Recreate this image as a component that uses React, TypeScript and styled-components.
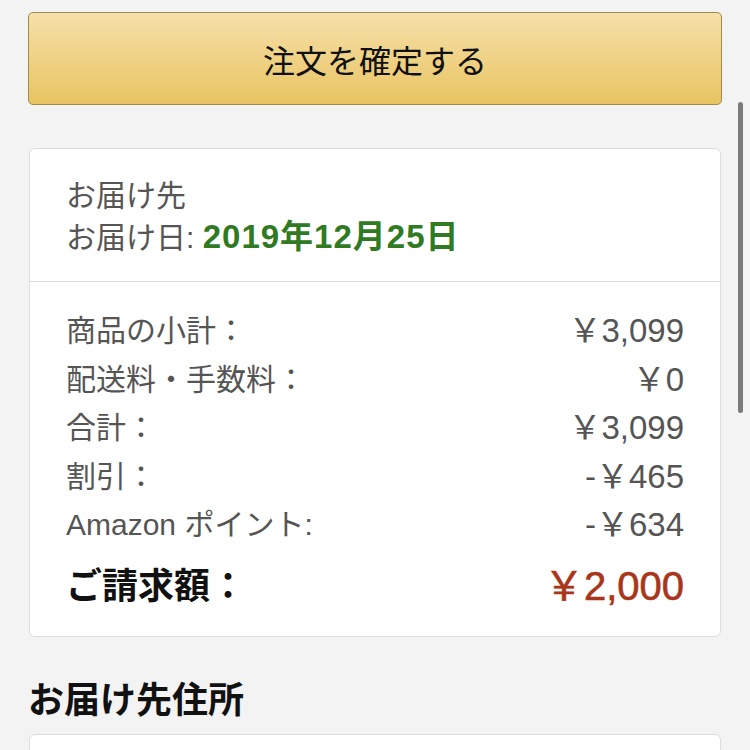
import React from 'react';
import styled, { createGlobalStyle } from 'styled-components';

interface Line {
  label: string;
  value: string;
}

const lines: Line[] = [
  { label: '商品の小計：', value: '￥3,099' },
  { label: '配送料・手数料：', value: '￥0' },
  { label: '合計：', value: '￥3,099' },
  { label: '割引：', value: '-￥465' },
  { label: 'Amazon ポイント:', value: '-￥634' },
];

const GlobalStyle = createGlobalStyle`
  html, body {
    margin: 0;
    padding: 0;
    background: #f3f3f3;
    font-family: "Liberation Sans", "Noto Sans CJK JP", sans-serif;
    overflow: hidden;
  }
`;

const Page = styled.div`
  padding: 12px 28px 0;
  height: 750px;
  box-sizing: border-box;
`;

const PlaceOrderButton = styled.button`
  display: flex;
  align-items: center;
  justify-content: center;
  width: 100%;
  height: 93px;
  border: 1.5px solid #a08a4c;
  border-radius: 5px;
  background: linear-gradient(to bottom, #f6e0aa, #e8c461);
  font-family: inherit;
  font-size: 32px;
  color: #111;
  padding: 0;
`;

const Card = styled.section<{ $top: number }>`
  margin: ${(p) => p.$top}px 1px 0;
  background: #fff;
  border: 1.5px solid #dcdcdc;
  border-radius: 6px;
`;

const DeliveryInfo = styled.div`
  padding: 26px 36px 23px;
  border-bottom: 1.5px solid #dcdcdc;
  font-size: 30px;
  line-height: 41px;
  color: #555;
`;

const DeliveryDate = styled.span`
  color: #2f7a22;
  font-size: 33px;
  font-weight: 700;
  letter-spacing: 1px;
`;

const Summary = styled.div`
  padding: 22px 36px 28px;
`;

const Row = styled.div`
  display: flex;
  justify-content: space-between;
  align-items: center;
  height: 48.5px;
  font-size: 30px;
  color: #555;
`;

const Value = styled.span`
  font-size: 33px;
`;

const TotalRow = styled.div`
  display: flex;
  justify-content: space-between;
  align-items: center;
  height: 50px;
  margin-top: 11px;
`;

const TotalLabel = styled.span`
  font-size: 36px;
  font-weight: 700;
  color: #111;
`;

const TotalValue = styled.span`
  font-size: 40px;
  color: #a8361a;
  -webkit-text-stroke: 0.6px #a8361a;
`;

const Heading = styled.h2`
  margin: 42px 0 0;
  font-size: 36px;
  font-weight: 700;
  line-height: 44px;
  color: #111;
`;

const AddressBody = styled.div`
  height: 60px;
`;

const ScrollIndicator = styled.div`
  position: fixed;
  top: 102px;
  right: 7px;
  width: 5px;
  height: 311px;
  border-radius: 3px;
  background: #7b7b7b;
`;

const App: React.FC = () => (
  <>
    <GlobalStyle />
    <Page>
      <PlaceOrderButton>注文を確定する</PlaceOrderButton>
      <Card $top={43}>
        <DeliveryInfo>
          <div>お届け先</div>
          <div>
            お届け日: <DeliveryDate>2019年12月25日</DeliveryDate>
          </div>
        </DeliveryInfo>
        <Summary>
          {lines.map((line) => (
            <Row key={line.label}>
              <span>{line.label}</span>
              <Value>{line.value}</Value>
            </Row>
          ))}
          <TotalRow>
            <TotalLabel>ご請求額：</TotalLabel>
            <TotalValue>￥2,000</TotalValue>
          </TotalRow>
        </Summary>
      </Card>
      <Heading>お届け先住所</Heading>
      <Card $top={11}>
        <AddressBody />
      </Card>
    </Page>
    <ScrollIndicator />
  </>
);

export default App;
